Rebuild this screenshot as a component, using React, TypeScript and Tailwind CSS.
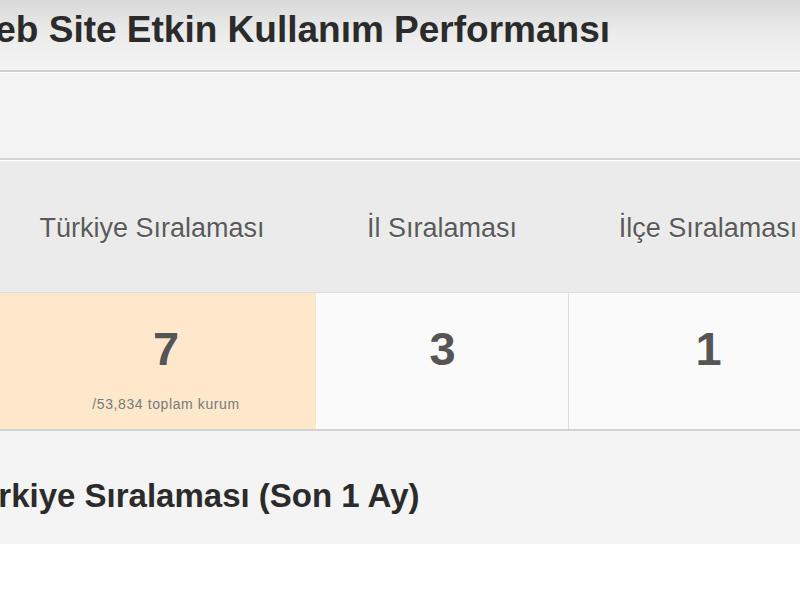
const App = () => {
  return (
    <div
      className="w-[800px] h-[594px] overflow-hidden bg-white text-[#333]"
      style={{ fontFamily: '"Liberation Sans", Arial, sans-serif' }}
    >
      {/* Page title bar */}
      <header className="h-[72px] bg-gradient-to-b from-[#d9d9d9] via-[#ececec] to-[#f3f3f3] border-b-2 border-[#cfcfcf] flex items-center">
        <h1 className="ml-[-39px] whitespace-nowrap text-[37px] leading-none font-bold text-[#2b2b2b] pb-3">
          Web Site Etkin Kullanım Performansı
        </h1>
      </header>

      {/* Empty toolbar strip */}
      <div className="h-[88px] bg-[#f3f3f3] border-t border-white border-b-2 border-b-[#d6d6d6]"></div>

      {/* Ranking table */}
      <div className="w-[860px] border-b-2 border-[#d2d2d2] shadow-[0_2px_3px_rgba(0,0,0,0.08)]">
        <div className="grid grid-cols-[316px_252px_292px] h-[133px] bg-[#ebebeb] border-t border-white border-b border-b-[#dedede] text-[27px] text-[#5a5a5a] [text-shadow:0_1px_0_#fff]">
          <div className="flex items-center justify-center pr-3 pt-1">Türkiye Sıralaması</div>
          <div className="flex items-center justify-center pt-1">İl Sıralaması</div>
          <div className="flex items-center justify-center pr-3 pt-1">İlçe Sıralaması</div>
        </div>
        <div className="grid grid-cols-[316px_252px_292px] h-[136px]">
          <div className="bg-[#fde8cb] flex flex-col items-center pl-4 pt-[32px]">
            <span className="text-[47px] leading-none font-bold text-[#555]">7</span>
            <span className="mt-[22px] text-[14px] tracking-[0.6px] text-[#7a7a7a]">/53,834 toplam kurum</span>
          </div>
          <div className="bg-[#fafafa] border-l border-white flex justify-center pt-[32px]">
            <span className="text-[47px] leading-none font-bold text-[#555]">3</span>
          </div>
          <div className="bg-[#fafafa] border-l border-[#dcdcdc] flex justify-center pt-[32px] pr-3">
            <span className="text-[47px] leading-none font-bold text-[#555]">1</span>
          </div>
        </div>
      </div>

      {/* Chart section header */}
      <div className="h-[113px] bg-[#f4f4f4] flex items-center">
        <h2 className="ml-[-42px] whitespace-nowrap text-[33px] leading-none font-bold text-[#2b2b2b] pt-4">
          Türkiye Sıralaması (Son 1 Ay)
        </h2>
      </div>
    </div>
  );
};

export default App;
